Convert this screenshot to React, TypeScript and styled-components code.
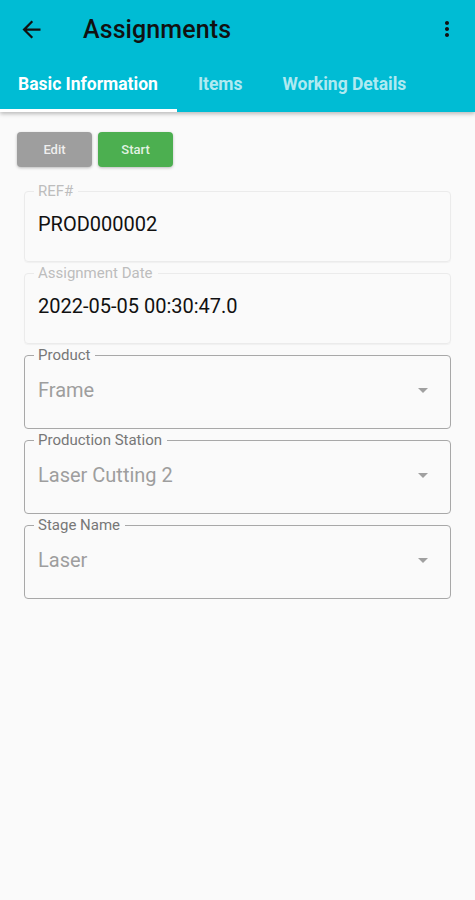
import styled, { createGlobalStyle } from 'styled-components'

const GlobalStyle = createGlobalStyle`
    html, body {
        margin: 0;
        padding: 0;
        background: #fafafa;
        font-family: Roboto, 'Noto Sans', sans-serif;
    }
    * { box-sizing: border-box; }
`

const fields = [
    { label: 'REF#', value: 'PROD000002', select: false },
    { label: 'Assignment Date', value: '2022-05-05 00:30:47.0', select: false },
    { label: 'Product', value: 'Frame', select: true },
    { label: 'Production Station', value: 'Laser Cutting 2', select: true },
    { label: 'Stage Name', value: 'Laser', select: true },
]

const tabs = ['Basic Information', 'Items', 'Working Details']

function BackIcon() {
    return (
        <svg width="27" height="27" viewBox="0 0 24 24" fill="#111">
            <path d="M20 11H7.83l5.59-5.59L12 4l-8 8 8 8 1.41-1.41L7.83 13H20v-2z" />
        </svg>
    )
}

function MoreIcon() {
    return (
        <svg width="24" height="24" viewBox="0 0 24 24" fill="#111">
            <path d="M12 8c1.1 0 2-.9 2-2s-.9-2-2-2-2 .9-2 2 .9 2 2 2zm0 2c-1.1 0-2 .9-2 2s.9 2 2 2 2-.9 2-2-.9-2-2-2zm0 6c-1.1 0-2 .9-2 2s.9 2 2 2 2-.9 2-2-.9-2-2-2z" />
        </svg>
    )
}

function DropIcon() {
    return (
        <svg width="24" height="24" viewBox="0 0 24 24" fill="#a0a0a0">
            <path d="M7 10l5 5 5-5z" />
        </svg>
    )
}

export default function App() {
    return (
        <Screen>
            <GlobalStyle />
            <Header>
                <AppBar>
                    <IconButton><BackIcon /></IconButton>
                    <Title>Assignments</Title>
                    <IconButton className='more'><MoreIcon /></IconButton>
                </AppBar>
                <TabRow>
                    {tabs.map((t, i) => (
                        <Tab key={t} $active={i === 0}>{t}</Tab>
                    ))}
                </TabRow>
            </Header>

            <Content>
                <ButtonRow>
                    <ActionButton $color="#9e9e9e">Edit</ActionButton>
                    <ActionButton $color="#4caf50">Start</ActionButton>
                </ButtonRow>

                <FieldList>
                    {fields.map(f => (
                        <Field key={f.label} $select={f.select}>
                            <legend>{f.label}</legend>
                            <FieldValue $select={f.select}>
                                <span>{f.value}</span>
                                {f.select && <DropIcon />}
                            </FieldValue>
                        </Field>
                    ))}
                </FieldList>
            </Content>
        </Screen>
    )
}

const Screen = styled.div`
    width: 475px;
    min-height: 900px;
    background: #fafafa;
`

const Header = styled.header`
    background: #00bcd4;
    box-shadow: 0 2px 4px rgba(0, 0, 0, 0.25);
`

const AppBar = styled.div`
    height: 56px;
    display: flex;
    align-items: center;
    padding: 2px 16px 0 18px;

    .more {
        margin-left: auto;
    }
`

const IconButton = styled.div`
    display: flex;
    align-items: center;
    justify-content: center;
`

const Title = styled.h1`
    margin: 0 0 0 38px;
    font-size: 25px;
    font-weight: 500;
    color: #111;
    letter-spacing: 0.1px;
`

const TabRow = styled.div`
    display: flex;
    height: 56px;
`

const Tab = styled.div<{ $active?: boolean }>`
    display: flex;
    align-items: center;
    padding: 2px 19px 0 18px;
    font-size: 17.5px;
    font-weight: 700;
    color: ${p => p.$active ? '#ffffff' : 'rgba(255, 255, 255, 0.7)'};
    border-bottom: 3px solid ${p => p.$active ? '#ffffff' : 'transparent'};

    & + & {
        padding-left: 21px;
    }
`

const Content = styled.main`
    padding: 20px 24px 0 17px;
`

const ButtonRow = styled.div`
    display: flex;
    gap: 6px;
`

const ActionButton = styled.button<{ $color: string }>`
    width: 75px;
    height: 35px;
    border: none;
    border-radius: 4px;
    background: ${p => p.$color};
    color: rgba(255, 255, 255, 0.85);
    font-family: Roboto, sans-serif;
    font-size: 13px;
    font-weight: 500;
    box-shadow: 0 1px 3px rgba(0, 0, 0, 0.25);
`

const FieldList = styled.div`
    display: flex;
    flex-direction: column;
    gap: 4px;
    margin: 17px 0 0 7px;
`

const Field = styled.fieldset<{ $select?: boolean }>`
    margin: 0;
    padding: 0 9px ${p => p.$select ? '11px' : '12px'};
    min-width: 0;
    border: 1px solid ${p => p.$select ? '#a8a8a8' : '#ebebeb'};
    border-radius: 4px;
    box-shadow: ${p => p.$select ? 'none' : '0 1px 1px rgba(0, 0, 0, 0.04)'};

    legend {
        padding: 0 5px 0 4px;
        margin-left: 0;
        font-size: 15px;
        line-height: 14px;
        color: ${p => p.$select ? '#777777' : '#bdbdbd'};
    }
`

const FieldValue = styled.div<{ $select?: boolean }>`
    display: flex;
    align-items: center;
    justify-content: space-between;
    height: ${p => p.$select ? '55px' : '51px'};
    padding: 0 6px 0 4px;
    font-size: 20px;
    color: ${p => p.$select ? '#9e9e9e' : '#111111'};
`
